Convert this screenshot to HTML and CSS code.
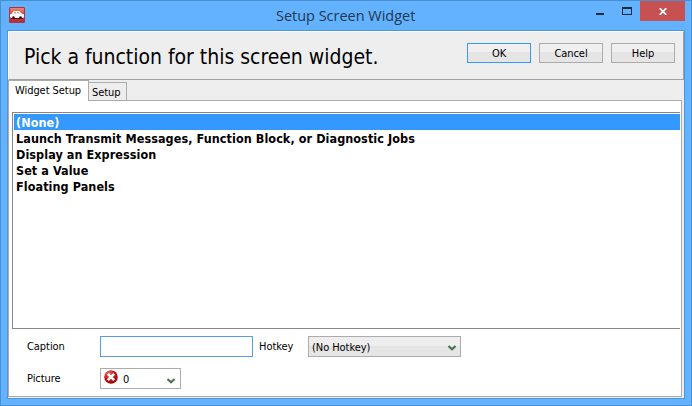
FILE: index.html
```html
<!DOCTYPE html>
<html lang="en">
<head>
<meta charset="utf-8">
<title>Setup Screen Widget</title>
<link rel="stylesheet" href="styles.css">
</head>
<body>
<div class="window">
  <header class="titlebar">
    <svg class="app-icon" width="16" height="16" viewBox="0 0 16 16">
      <defs><linearGradient id="app" x1="0" y1="0" x2="0" y2="1"><stop offset="0" stop-color="#f08a78"/><stop offset=".5" stop-color="#dc3a34"/><stop offset="1" stop-color="#b52a36"/></linearGradient></defs>
      <rect x=".5" y=".5" width="15" height="15" rx=".5" fill="url(#app)" stroke="#a83540"/>
      <path d="M4.500 4h6l2 2.500 2.500 1V10l-1 1H2l-1-1V7.500l2-1z" fill="#fff"/>
      <path d="M5.500 5h1.500v1.500H4.500zM8 5h1.500l1.200 1.500H8z" fill="#e59a96"/>
      <path d="M2 11h12v1H2z" fill="#611520"/>
      <circle cx="4.500" cy="10.500" r="1.300" fill="#3a1018"/><circle cx="11.500" cy="10.500" r="1.300" fill="#3a1018"/>
    </svg>
    <h1 class="window-title">Setup Screen Widget</h1>
    <div class="window-controls">
      <svg width="44" height="20" viewBox="0 0 44 20" shape-rendering="crispEdges"><path d="M0 12h8v2H0z" fill="#222b33"/><path d="M26 6h10v8H26zM27 8v5h8V8z" fill="#222b33" fill-rule="evenodd"/></svg>
      <div class="close"><svg width="8" height="7" viewBox="0 0 8 7"><path d="M.7.2l6.600 6.600M7.300.2L.7 6.800" stroke="#fff" stroke-width="1.800"/></svg></div>
    </div>
  </header>
  <main class="client">
    <section class="banner">
      <h2 class="prompt">Pick a function for this screen widget.</h2>
      <div class="actions">
        <button class="btn default">OK</button>
        <button class="btn">Cancel</button>
        <button class="btn">Help</button>
      </div>
    </section>
    <nav class="tabs">
      <div class="tab active">Widget Setup</div>
      <div class="tab">Setup</div>
      <div class="tab-rest"></div>
    </nav>
    <section class="page">
      <ul class="list">
        <li class="selected">(None)</li>
        <li>Launch Transmit Messages, Function Block, or Diagnostic Jobs</li>
        <li>Display an Expression</li>
        <li>Set a Value</li>
        <li>Floating Panels</li>
      </ul>
      <div class="form">
        <label>Caption</label>
        <div class="input"></div>
        <label class="hotkey-label">Hotkey</label>
        <div class="select"><span>(No Hotkey)</span>
          <svg class="chevron" width="8" height="6" viewBox="0 0 8 6"><path d="M.5 1L4 4.300 7.500 1" fill="none" stroke="#4b704f" stroke-width="2"/></svg></div>
        <label>Picture</label>
        <div class="picture">
          <svg class="error" width="14" height="14" viewBox="0 0 14 14"><defs><radialGradient id="err" cx=".35" cy=".25" r=".8"><stop offset="0" stop-color="#ed6c68"/><stop offset=".5" stop-color="#cc1515"/><stop offset="1" stop-color="#9c0505"/></radialGradient></defs><circle cx="7" cy="7" r="6.800" fill="url(#err)"/><path d="M3.800 3.800l6.400 6.400M10.200 3.800L3.800 10.200" stroke="#fff" stroke-width="2.600"/></svg>
          <span class="number">0</span>
          <svg class="chevron" width="8" height="6" viewBox="0 0 8 6"><path d="M.5 1L4 4.300 7.500 1" fill="none" stroke="#4b704f" stroke-width="2"/></svg>
        </div>
      </div>
    </section>
  </main>
</div>
</body>
</html>
```
FILE: styles.css
```css
* { box-sizing: border-box; }
body { margin: 0; font: 11px/16px "DejaVu Sans Condensed", "DejaVu Sans", sans-serif; font-stretch: condensed; letter-spacing: -0.06px; color: #000; }
h1, h2, ul { margin: 0; padding: 0; font-weight: normal; }
span { white-space: nowrap; }
.window { width: 692px; height: 406px; border: 1px solid #4a8fce; background: #63b2ff; padding: 0 6px 6px; }
.titlebar { height: 29px; display: grid; grid-template-columns: 268px 1fr 88px; align-items: start; }
.app-icon { margin: 6px 0 0 2px; }
.window-title { font: 14.5px/20px "Open Sans", sans-serif; letter-spacing: -0.02px; color: #24384c; padding-top: 5px; white-space: nowrap; padding-left: 1px; }
.window-controls { display: flex; width: 89px; justify-self: end; }
.window-controls > svg { flex: none; }
.close { width: 45px; height: 20px; background: #c75050; display: flex; align-items: center; justify-content: center; padding-top: 1px; }
.client { height: 369px; border: 1px solid #4a97dc; background: #eee; }
.banner { height: 49px; border: 1px solid #a0a0a0; border-left-color: #fff; border-top-color: #fff; display: flex; justify-content: space-between; }
.prompt { font-size: 21px; line-height: 26px; letter-spacing: -0.02px; padding: 12px 0 0 15px; white-space: nowrap; }
.actions { display: flex; gap: 8px; padding: 11px 8px 0 0; }
.btn { width: 64px; height: 20px; border: 1px solid #acacac; padding: 1px 0 0; background: linear-gradient(#f0f0f0 0 45%, #e5e5e5 45%); font: inherit; letter-spacing: inherit; line-height: 18px; color: #000; }
.btn.default { border-color: #3399ff; }
.tabs { display: flex; height: 21px; align-items: flex-end; width: 674px; }
.tab { height: 19px; width: 38px; border: 1px solid #acacac; border-left: 0; padding-left: 3px; line-height: 20px; white-space: nowrap; }
.tab.active { height: 21px; width: 81px; background: #fff; border-left: 1px solid #acacac; border-bottom: 0; padding-left: 6px; line-height: 19px; }
.tab-rest { flex: 1; height: 1px; background: #acacac; }
.page { width: 674px; height: 296px; border: 1px solid #acacac; border-top: 0; background: #fff; padding: 11px 1px 0 3px; }
.list { height: 217px; border: 1px solid #828790; border-right: 0; padding: 1px 0 0 1px; list-style: none; font-weight: bold; font-size: 12.5px; letter-spacing: 0.07px; }
.list li { height: 16px; padding-left: 2px; line-height: 18px; white-space: nowrap; }
.list .selected { background: #3399ff; color: #fff; }
.form { display: grid; grid-template-columns: 73px 153px 55px 153px; grid-template-rows: 21px 21px; row-gap: 11px; padding: 7px 0 0 15px; line-height: 22px; }
.input { border: 1px solid #569de5; }
.hotkey-label { padding-left: 6px; }
.select, .picture { border: 1px solid #acacac; display: flex; align-items: center; }
.select { background: linear-gradient(#eee 0 45%, #e5e5e5 45%); padding: 2px 4px 0 3px; }
.chevron { margin-left: auto; }
.picture { width: 81px; padding: 0 5px 2px 3px; }
.error { margin-top: -1px; }
.number { margin: 4px 0 0 5px; }
.picture .chevron { margin-top: 7px; }
```
